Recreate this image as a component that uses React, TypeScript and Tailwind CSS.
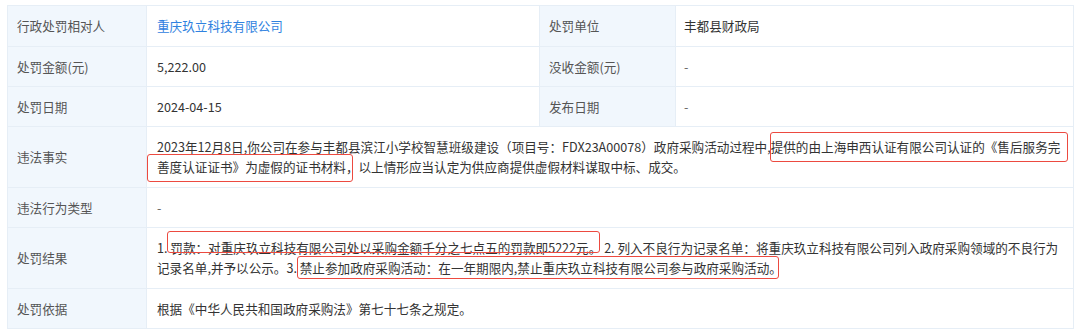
import React from 'react';

const Mark: React.FC<{ box: string; children: React.ReactNode }> = ({ box, children }) => (
  <span className="relative">
    {children}
    <span className={`pointer-events-none absolute rounded-[3px] border-[1.5px] border-[#ec4a40] ${box}`} />
  </span>
);

const Label: React.FC<{ children: React.ReactNode }> = ({ children }) => (
  <td className="border border-[#e6eef6] bg-[#f1f7fd] pl-[9px] text-[#555]">{children}</td>
);

export default function App() {
  return (
    <div
      className="min-h-[336px] bg-white pl-[7px] pt-[5px] text-[12.6px] leading-[20px] text-[#333]"
      style={{ fontFamily: '"Noto Sans CJK SC", "Noto Sans", sans-serif' }}
    >
      <table className="w-[1066px] table-fixed border-collapse">
        <colgroup>
          <col className="w-[139px]" />
          <col className="w-[393px]" />
          <col className="w-[136px]" />
          <col className="w-[398px]" />
        </colgroup>
        <tbody>
          <tr className="h-[41px]">
            <Label>行政处罚相对人</Label>
            <td className="border border-[#e6eef6] pl-[10px] text-[#2f82e0]">重庆玖立科技有限公司</td>
            <Label>处罚单位</Label>
            <td className="border border-[#e6eef6] pl-[8px]">丰都县财政局</td>
          </tr>
          <tr className="h-[40px]">
            <Label>处罚金额(元)</Label>
            <td className="border border-[#e6eef6] pl-[10px]">5,222.00</td>
            <Label>没收金额(元)</Label>
            <td className="border border-[#e6eef6] pl-[8px] text-[#666]">-</td>
          </tr>
          <tr className="h-[40px]">
            <Label>处罚日期</Label>
            <td className="border border-[#e6eef6] pl-[10px]">2024-04-15</td>
            <Label>发布日期</Label>
            <td className="border border-[#e6eef6] pl-[8px] text-[#666]">-</td>
          </tr>
          <tr className="h-[61px]">
            <Label>违法事实</Label>
            <td colSpan={3} className="whitespace-nowrap border border-[#e6eef6] pl-[10px]">
              2023年12月8日,你公司在参与丰都县滨江小学校智慧班级建设（项目号：FDX23A00078）政府采购活动过程中,
              <Mark box="top-[-5px] bottom-[-6px] left-[-1px] right-[-8px]">提供的由上海申西认证有限公司认证的《售后服务完</Mark>
              <br />
              <Mark box="top-[-3px] bottom-[-6px] left-[-10px] right-[-7px]">善度认证证书》为虚假的证书材料</Mark>
              ，以上情形应当认定为供应商提供虚假材料谋取中标、成交。
            </td>
          </tr>
          <tr className="h-[40px]">
            <Label>违法行为类型</Label>
            <td colSpan={3} className="border border-[#e6eef6] pl-[10px] text-[#666]">-</td>
          </tr>
          <tr className="h-[61px]">
            <Label>处罚结果</Label>
            <td colSpan={3} className="whitespace-nowrap border border-[#e6eef6] pl-[10px]">
              1.{' '}
              <Mark box="top-[-7px] bottom-[4px] left-[-3px] right-[1px]">罚款：对重庆玖立科技有限公司处以采购金额千分之七点五的罚款即5222元。</Mark>
              {' '}2. 列入不良行为记录名单：将重庆玖立科技有限公司列入政府采购领域的不良行为
              <br />
              记录名单,并予以公示。3.{' '}
              <Mark box="top-[-2px] bottom-[-2px] left-[-3px] right-[3px]">禁止参加政府采购活动：在一年期限内,禁止重庆玖立科技有限公司参与政府采购活动。</Mark>
            </td>
          </tr>
          <tr className="h-[40px]">
            <Label>处罚依据</Label>
            <td colSpan={3} className="border border-[#e6eef6] pl-[10px]">根据《中华人民共和国政府采购法》第七十七条之规定。</td>
          </tr>
        </tbody>
      </table>
    </div>
  );
}
